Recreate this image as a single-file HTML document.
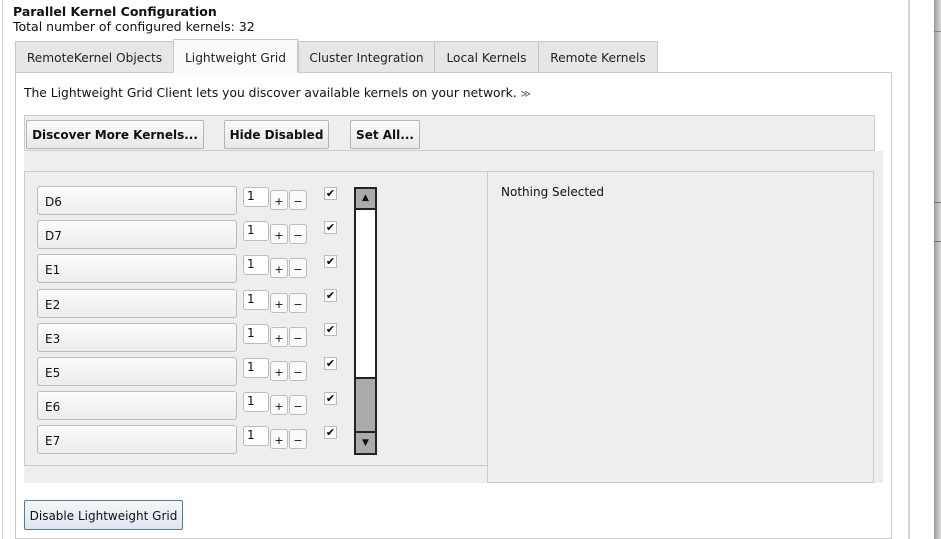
<!DOCTYPE html>
<html><head><meta charset="utf-8"><style>
*{box-sizing:border-box;margin:0;padding:0}
body{width:941px;height:539px;background:#fff;position:relative;overflow:hidden;font-family:"DejaVu Sans","Liberation Sans",sans-serif;font-size:12px;color:#111}
.a{position:absolute}
.tab{position:absolute;top:41px;height:31px;background:#e6e6e6;border:1px solid #c8c8c8;border-bottom:none;text-align:center;line-height:33px;font-size:12.2px;color:#222}
.btn{position:absolute;top:120px;height:29px;border:1px solid #b5b5b5;border-radius:2px;background:linear-gradient(#fafafa,#e8e8e8);font-weight:bold;font-size:12px;line-height:29px;text-align:center}
.row{position:absolute;left:37px;width:200px;height:29px;border:1px solid #bcbcbc;border-radius:3px;background:linear-gradient(#fcfcfc,#ececec);padding-left:7px;line-height:31px;font-size:12px}
.tf{position:absolute;left:243px;width:26px;height:20px;border:1px solid #bbb;border-radius:3px;background:#fff;font-size:12px;line-height:16px;padding-left:3px}
.sb{position:absolute;width:18px;height:20px;border:1px solid #bbb;border-radius:3px;background:#fafafa;font-size:11px;text-align:center;line-height:22px}
.cb{position:absolute;left:324px;width:13px;height:13px;border:1px solid #bbb;background:#fff;font-size:11px;line-height:12px;text-align:center;font-weight:bold;color:#000}
</style></head><body>
<div class="a" style="left:2px;top:0;width:1px;height:539px;background:#ccc"></div>
<div class="a" style="left:908px;top:0;width:2px;height:539px;background:#d4d4d4"></div>
<div class="a" style="left:934px;top:0;width:7px;height:539px;background:linear-gradient(90deg,#999,#ddd)"></div>
<div class="a" style="left:934px;top:31px;width:7px;height:1px;background:#888"></div>
<div class="a" style="left:934px;top:202px;width:7px;height:1px;background:#777"></div>
<div class="a" style="left:934px;top:241px;width:7px;height:1px;background:#777"></div>
<div class="a" style="left:13px;top:4px;font-weight:bold;font-size:12.5px">Parallel Kernel Configuration</div>
<div class="a" style="left:13px;top:19px;font-size:12.5px">Total number of configured kernels: 32</div>
<div class="a" style="left:15px;top:72px;width:877px;height:467px;border:1px solid #ccc"></div>
<div class="tab" style="left:15px;width:159px">RemoteKernel Objects</div>
<div class="tab" style="left:173px;width:125px;top:39px;height:34px;background:#fafafa;line-height:36px">Lightweight Grid</div>
<div class="tab" style="left:298px;width:137px">Cluster Integration</div>
<div class="tab" style="left:434px;width:105px">Local Kernels</div>
<div class="tab" style="left:538px;width:120px">Remote Kernels</div>
<div class="a" style="left:24px;top:86px;font-size:12.3px">The Lightweight Grid Client lets you discover available kernels on your network. <span style="color:#557;font-size:10px">≫</span></div>
<div class="a" style="left:24px;top:115px;width:851px;height:36px;background:#eee;border:1px solid #ccc"></div>
<div class="btn" style="left:26px;width:178px">Discover More Kernels...</div>
<div class="btn" style="left:224px;width:105px">Hide Disabled</div>
<div class="btn" style="left:350px;width:70px">Set All...</div>
<div class="a" style="left:24px;top:151px;width:859px;height:332px;background:#eee"></div>
<div class="a" style="left:24px;top:171px;width:463px;height:295px;border:1px solid #ccc;border-right:none;overflow:hidden">
</div>
<div class="a" style="left:487px;top:171px;width:387px;height:312px;border:1px solid #ccc;background:#eee;padding:13px 0 0 13px;font-size:12px">Nothing Selected</div>
<div class="a" style="left:0;top:0;width:941px;height:454px;overflow:hidden">
<div class="row" style="top:186px">D6</div>
<div class="row" style="top:220px">D7</div>
<div class="row" style="top:254px">E1</div>
<div class="row" style="top:289px">E2</div>
<div class="row" style="top:323px">E3</div>
<div class="row" style="top:357px">E5</div>
<div class="row" style="top:391px">E6</div>
<div class="row" style="top:425px">E7</div>
</div>
<div class="tf" style="top:187px">1</div><div class="sb" style="left:270px;top:190px">+</div><div class="sb" style="left:289px;top:190px">−</div><div class="cb" style="top:187px">✔</div>
<div class="tf" style="top:221px">1</div><div class="sb" style="left:270px;top:224px">+</div><div class="sb" style="left:289px;top:224px">−</div><div class="cb" style="top:221px">✔</div>
<div class="tf" style="top:255px">1</div><div class="sb" style="left:270px;top:258px">+</div><div class="sb" style="left:289px;top:258px">−</div><div class="cb" style="top:255px">✔</div>
<div class="tf" style="top:290px">1</div><div class="sb" style="left:270px;top:293px">+</div><div class="sb" style="left:289px;top:293px">−</div><div class="cb" style="top:289px">✔</div>
<div class="tf" style="top:324px">1</div><div class="sb" style="left:270px;top:327px">+</div><div class="sb" style="left:289px;top:327px">−</div><div class="cb" style="top:323px">✔</div>
<div class="tf" style="top:358px">1</div><div class="sb" style="left:270px;top:361px">+</div><div class="sb" style="left:289px;top:361px">−</div><div class="cb" style="top:357px">✔</div>
<div class="tf" style="top:392px">1</div><div class="sb" style="left:270px;top:395px">+</div><div class="sb" style="left:289px;top:395px">−</div><div class="cb" style="top:392px">✔</div>
<div class="tf" style="top:426px">1</div><div class="sb" style="left:270px;top:429px">+</div><div class="sb" style="left:289px;top:429px">−</div><div class="cb" style="top:426px">✔</div>
<div class="a" style="left:354px;top:187px;width:23px;height:268px;border:2px solid #222;background:#fff"></div>
<div class="a" style="left:354px;top:187px;width:23px;height:23px;border:2px solid #222;background:#aaa;font-size:9px;text-align:center;line-height:19px">▲</div>
<div class="a" style="left:354px;top:377px;width:23px;height:56px;border:2px solid #222;background:#aaa"></div>
<div class="a" style="left:354px;top:431px;width:23px;height:24px;border:2px solid #222;background:#aaa;font-size:9px;text-align:center;line-height:20px">▼</div>
<div class="a" style="left:24px;top:500px;width:159px;height:30px;border:1px solid #5a7a94;border-radius:2px;background:linear-gradient(#f4f7fa,#dfe6ee);font-size:12px;line-height:30px;text-align:center">Disable Lightweight Grid</div>
</body></html>
